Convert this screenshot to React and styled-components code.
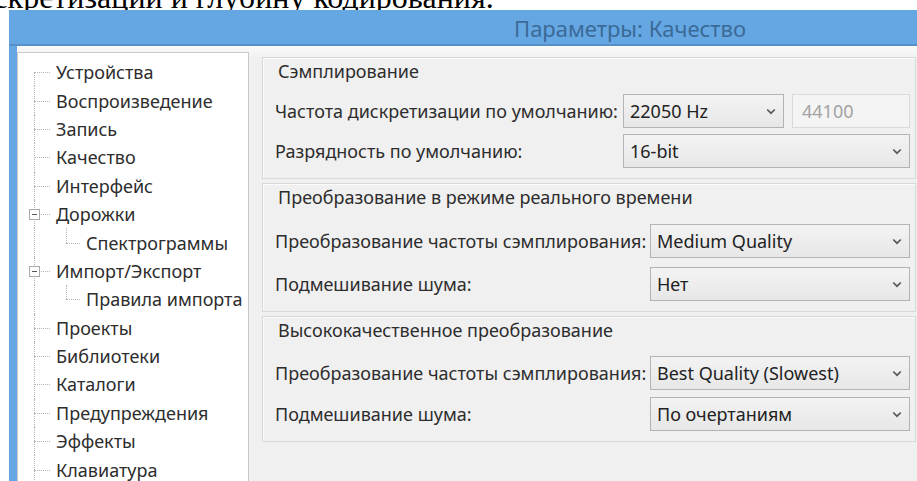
import React from "react";
import styled, { createGlobalStyle } from "styled-components";

const Global = createGlobalStyle`
  html, body { margin: 0; padding: 0; background: #fff; overflow: hidden; }
  body { width: 917px; height: 481px; }
`;

const UI_FONT = `"Noto Sans", "Open Sans", "DejaVu Sans", sans-serif`;

const Page = styled.div`
  width: 917px;
  height: 481px;
  display: flex;
  flex-direction: column;
  overflow: hidden;
`;

/* last line of the document paragraph, mostly hidden behind the dialog */
const Caption = styled.div`
  flex: none;
  height: 10px;
  overflow: hidden;
  font-family: "Liberation Serif", "Times New Roman", serif;
  font-size: 32px;
  line-height: 32px;
  color: #000;
  white-space: nowrap;
`;

const CaptionLine = styled.div`
  margin: -19px 0 0 -40px;
`;

const Window = styled.div`
  flex: 1;
  min-height: 0;
  margin-left: 9px;
  background: #64a7e3;
  display: flex;
  flex-direction: column;
`;

const TitleBar = styled.div`
  flex: none;
  height: 36px;
  display: flex;
  align-items: center;
  padding-left: 505px;
  font-family: ${UI_FONT};
  font-size: 22px;
  color: #3b6a97;
  box-shadow: inset 0 -2px 0 #5690c6;
`;

const Client = styled.div`
  flex: 1;
  min-height: 0;
  margin-left: 8px;
  background: linear-gradient(#fafafa, #f0f0f0 12px);
  display: flex;
  align-items: flex-start;
  gap: 13px;
  font-family: ${UI_FONT};
  font-size: 18px;
  color: #2d2d2d;
`;

const TreePanel = styled.div`
  flex: none;
  width: 232px;
  margin-top: 6px;
  align-self: stretch;
  box-sizing: border-box;
  background: #fff;
  border: 1px solid #c9c9c9;
  border-bottom: none;
  padding-top: 5px;
  overflow: hidden;
`;

const TreeRow = styled.div`
  height: 28.4px;
  display: flex;
  align-items: center;
  padding-left: 16px;
  white-space: nowrap;
`;

const LINE = "1px dotted #b4b4b4";

const Guide = styled.span`
  position: relative;
  flex: none;
  align-self: stretch;
  width: ${(p) => p.$width}px;

  &::before {
    content: "";
    position: absolute;
    left: 0;
    top: ${(p) => (p.$first ? "50%" : "0")};
    bottom: ${(p) => (p.$last ? "50%" : "0")};
    border-left: ${LINE};
  }

  &::after {
    content: "";
    display: ${(p) => (p.$through ? "none" : "block")};
    position: absolute;
    left: 0;
    top: 50%;
    width: ${(p) => p.$width - 2}px;
    border-top: ${LINE};
  }
`;

const Expander = styled.span`
  position: absolute;
  z-index: 1;
  left: -5px;
  top: 50%;
  width: 11px;
  height: 11px;
  margin-top: -5px;
  box-sizing: border-box;
  border: 1px solid #a9a9a9;
  background: #fff;

  &::before {
    content: "";
    position: absolute;
    left: 2px;
    right: 2px;
    top: 4px;
    border-top: 1px solid #555;
  }
`;

const TreeLabel = styled.span`
  margin-left: 4px;
`;

const Settings = styled.div`
  flex: 1;
  display: flex;
  flex-direction: column;
  gap: 4px;
  padding: 11px 1px 0 0;
`;

const Group = styled.section`
  border: 1px solid #d8d8d8;
  box-shadow: inset 1px 1px 0 #fbfbfb;
  padding: 3px 5px 10px 12px;
`;

const Legend = styled.div`
  line-height: 20px;
  margin-left: 3px;
`;

const Rows = styled.div`
  display: grid;
  grid-template-columns: ${(p) => p.$labelWidth}px 1fr;
  row-gap: ${(p) => p.$gap}px;
  margin-top: ${(p) => p.$offset}px;
  align-items: center;
`;

const Label = styled.span`
  white-space: nowrap;
`;

const ControlPair = styled.div`
  display: grid;
  grid-template-columns: 161px 1fr;
  gap: 8px;
`;

const Combo = styled.div`
  height: 34px;
  box-sizing: border-box;
  display: flex;
  align-items: center;
  justify-content: space-between;
  padding: 0 7px 0 6px;
  border: 1px solid #b3b3b3;
  background: linear-gradient(#f3f3f3, #e7e7e7);
  color: #222;
`;

const Field = styled.div`
  height: 34px;
  box-sizing: border-box;
  display: flex;
  align-items: center;
  padding-left: 9px;
  border: 1px solid #dadada;
  background: #f4f4f4;
  color: #a3a3a3;
`;

const Chevron = () => (
  <svg width="10" height="7" viewBox="0 0 10 7">
    <path d="M1.2 1.5 L5 5.2 L8.8 1.5" fill="none" stroke="#5a5a5a" strokeWidth="1.7" />
  </svg>
);

const Select = ({ value }) => (
  <Combo>
    <span>{value}</span>
    <Chevron />
  </Combo>
);

const tree = [
  { label: "Устройства", first: true },
  { label: "Воспроизведение" },
  { label: "Запись" },
  { label: "Качество" },
  { label: "Интерфейс" },
  { label: "Дорожки", open: true },
  { label: "Спектрограммы", child: true },
  { label: "Импорт/Экспорт", open: true },
  { label: "Правила импорта", child: true },
  { label: "Проекты" },
  { label: "Библиотеки" },
  { label: "Каталоги" },
  { label: "Предупреждения" },
  { label: "Эффекты" },
  { label: "Клавиатура" },
];

const groups = [
  {
    title: "Сэмплирование",
    labelWidth: 348,
    offset: 13,
    gap: 6,
    rows: [
      { label: "Частота дискретизации по умолчанию:", value: "22050 Hz", extra: "44100" },
      { label: "Разрядность по умолчанию:", value: "16-bit" },
    ],
  },
  {
    title: "Преобразование в режиме реального времени",
    labelWidth: 375,
    offset: 17,
    gap: 9,
    rows: [
      { label: "Преобразование частоты сэмплирования:", value: "Medium Quality" },
      { label: "Подмешивание шума:", value: "Нет" },
    ],
  },
  {
    title: "Высококачественное преобразование",
    labelWidth: 375,
    offset: 16,
    gap: 7,
    rows: [
      { label: "Преобразование частоты сэмплирования:", value: "Best Quality (Slowest)" },
      { label: "Подмешивание шума:", value: "По очертаниям" },
    ],
  },
];

export default function App() {
  return (
    <Page>
      <Global />
      <Caption>
        <CaptionLine>дискретизации и глубину кодирования.</CaptionLine>
      </Caption>
      <Window>
        <TitleBar>Параметры: Качество</TitleBar>
        <Client>
          <TreePanel>
            {tree.map((item) => (
              <TreeRow key={item.label}>
                {item.child ? (
                  <>
                    <Guide $width={32} $through />
                    <Guide $width={16} $last />
                  </>
                ) : (
                  <Guide $width={18} $first={item.first}>
                    {item.open && <Expander />}
                  </Guide>
                )}
                <TreeLabel>{item.label}</TreeLabel>
              </TreeRow>
            ))}
          </TreePanel>
          <Settings>
            {groups.map((g) => (
              <Group key={g.title}>
                <Legend>{g.title}</Legend>
                <Rows $labelWidth={g.labelWidth} $offset={g.offset} $gap={g.gap}>
                  {g.rows.map((r) => (
                    <React.Fragment key={r.label}>
                      <Label>{r.label}</Label>
                      {r.extra ? (
                        <ControlPair>
                          <Select value={r.value} />
                          <Field>{r.extra}</Field>
                        </ControlPair>
                      ) : (
                        <Select value={r.value} />
                      )}
                    </React.Fragment>
                  ))}
                </Rows>
              </Group>
            ))}
          </Settings>
        </Client>
      </Window>
    </Page>
  );
}
